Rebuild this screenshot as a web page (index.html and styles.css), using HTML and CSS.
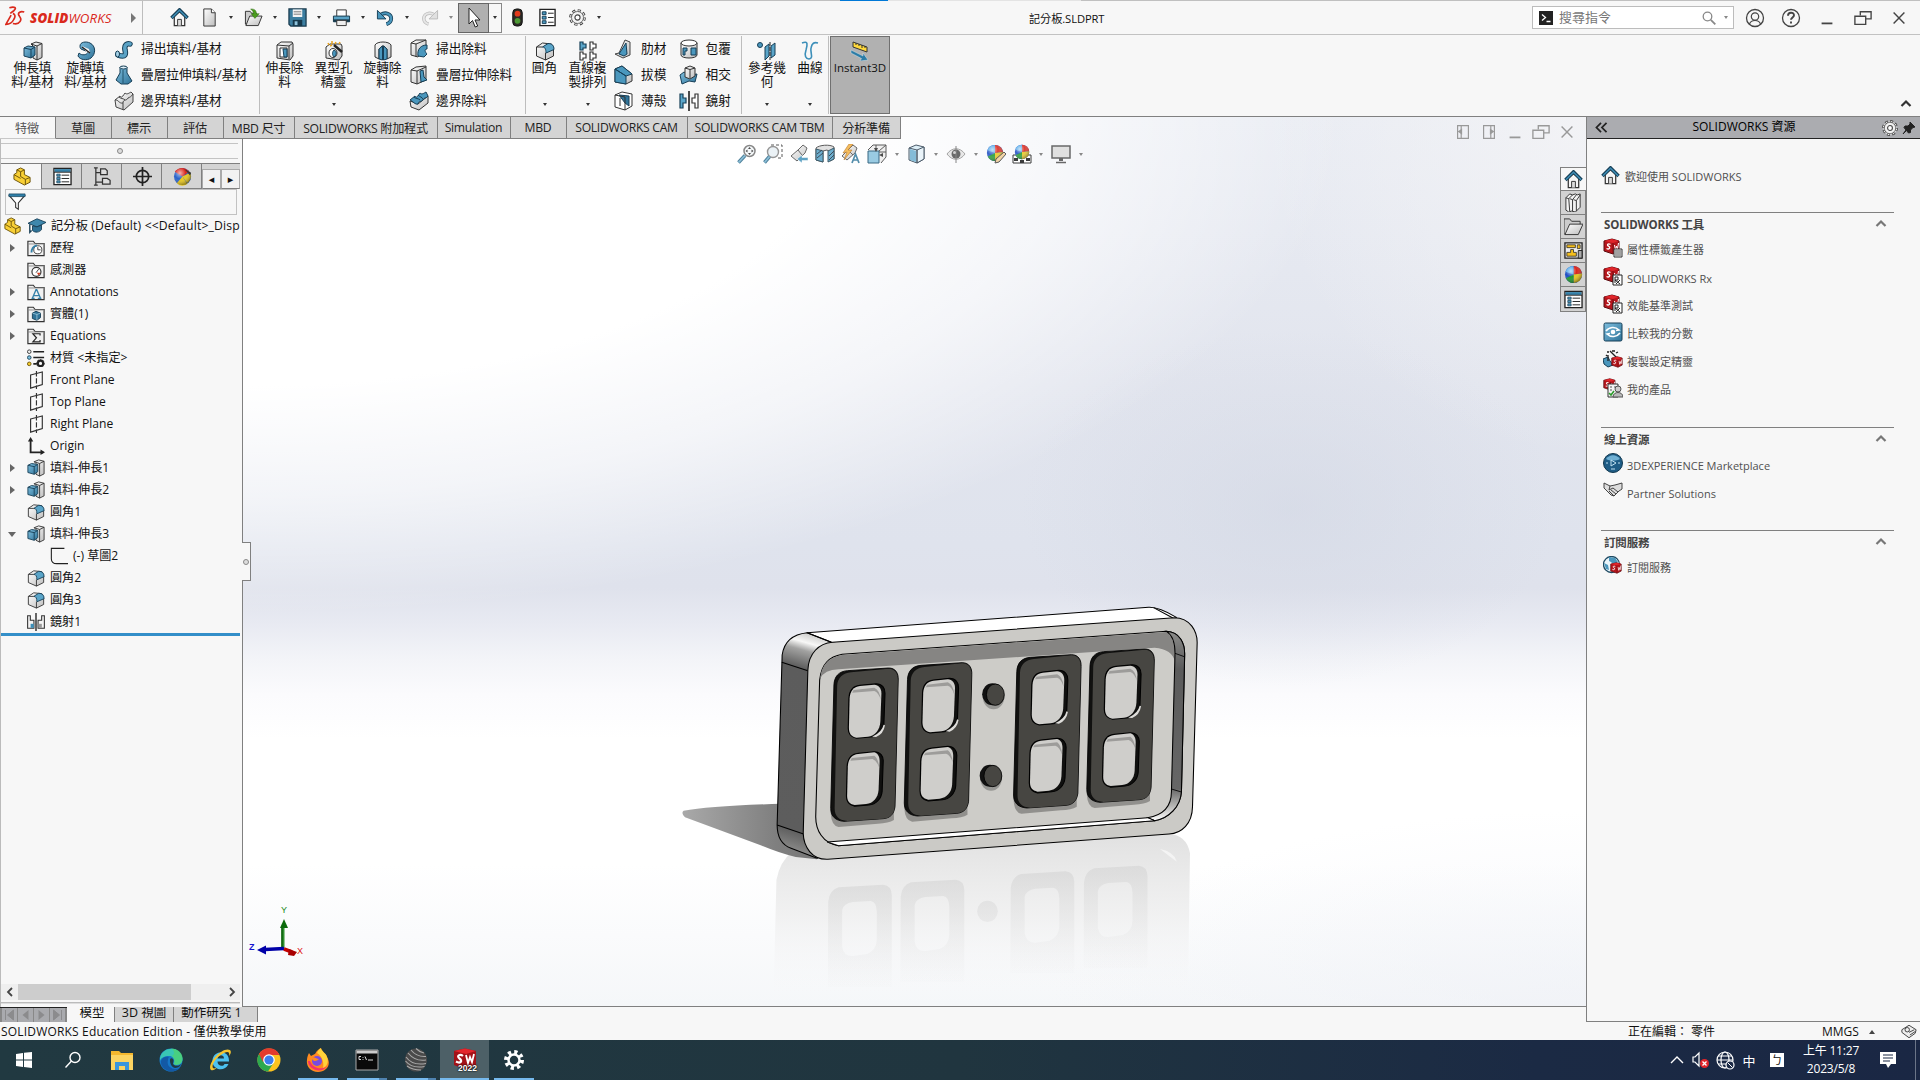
FILE: index.html
```html
<!DOCTYPE html>
<html lang="zh-Hant">
<head>
<meta charset="utf-8">
<title>記分板.SLDPRT</title>
<link rel="stylesheet" href="styles.css">
</head>
<body>
<svg class="defs" width="0" height="0" aria-hidden="true">
<defs>
<linearGradient id="gBlue" x1="0" y1="0" x2="1" y2="1"><stop offset="0" stop-color="#7fbfdf"/><stop offset="1" stop-color="#2f7398"/></linearGradient>
<linearGradient id="gGrey" x1="0" y1="0" x2="1" y2="1"><stop offset="0" stop-color="#fff"/><stop offset="1" stop-color="#bdbdbd"/></linearGradient>
<radialGradient id="gShade" cx=".35" cy=".3" r=".75"><stop offset="0" stop-color="#fff" stop-opacity=".65"/><stop offset=".45" stop-color="#fff" stop-opacity="0"/><stop offset="1" stop-color="#000" stop-opacity=".45"/></radialGradient>
<symbol id="home" viewBox="0 0 20 20"><path d="M4.500 9v9.500h11V9L10 4z" fill="#f6f6f6" stroke="#333" stroke-width="1.300"/><path d="M8 18.500V12h4v6.500" fill="#ddd" stroke="#333"/><path d="M1.500 10.500 10 2l8.500 8.500" fill="none" stroke="#173f57" stroke-width="3.600"/><path d="M2 10.200 10 2.300l8 7.900" fill="none" stroke="#3d8db5" stroke-width="1.500"/></symbol>
<symbol id="doc" viewBox="0 0 20 20"><path d="M4 1h8l4 4v14H4z" fill="url(#gGrey)" stroke="#333"/><path d="M12 1v4h4" fill="#fff" stroke="#333"/></symbol>
<symbol id="open" viewBox="0 0 20 20"><path d="M1.500 17V3.500h5l1.500 2h5V17z" fill="#ccc" stroke="#333"/><path d="m2 18.500 4-10h13l-4 10z" fill="url(#gGrey)" stroke="#333"/><path d="M7 1c5 0 6 2 6 5h3l-4.500 5L7.500 6H10c0-2-1-3-3-5z" fill="#4a9b1d" stroke="#2a6a0c" stroke-width=".5"/></symbol>
<symbol id="save" viewBox="0 0 20 20"><path d="M1 1h18v18H3l-2-2z" fill="#3c7ea0" stroke="#17394c" stroke-width="1.300"/><path d="M5 1.500h10v8H5z" fill="#f4f4f4"/><path d="M6 4h8M6 6.500h8" stroke="#777"/><path d="M5 12.500h10V19H5z" fill="#17394c"/><path d="M7 14h3v4H7z" fill="#8fc3dc"/></symbol>
<symbol id="print" viewBox="0 0 20 20"><path d="M5 2h10v7H5z" fill="#fff" stroke="#333"/><path d="M1.500 8.500h17v6h-17z" fill="#5aa3c6" stroke="#17394c"/><path d="M1.500 12h17v2.500h-17z" fill="#17394c"/><path d="M5 13h10v5.500H5z" fill="#eee" stroke="#333"/></symbol>
<symbol id="undo" viewBox="0 0 20 20"><path d="M5 7c5-3 11-1 11 4 0 3-2 5-5 6" fill="none" stroke="#173f57" stroke-width="4"/><path d="M5 7c5-3 11-1 11 4 0 3-2 5-5 6" fill="none" stroke="#4a97bd" stroke-width="2.300"/><path d="M1.500 2.500v9h9z" fill="#4a97bd" stroke="#173f57"/></symbol>
<symbol id="redo" viewBox="0 0 20 20"><path d="M15 7C10 4 4 6 4 11c0 3 2 5 5 6" fill="none" stroke="#bbb" stroke-width="3.500"/><path d="M15 7C10 4 4 6 4 11c0 3 2 5 5 6" fill="none" stroke="#e6e6e6" stroke-width="2"/><path d="M18.500 2.500v9h-9z" fill="#e0e0e0" stroke="#bbb"/></symbol>
<symbol id="cursor" viewBox="0 0 20 20"><path d="M5 0v16l3.500-3.500 2.700 6.500 2.500-1-2.700-6h5z" fill="#fff" stroke="#222"/></symbol>
<symbol id="traffic" viewBox="0 0 20 20"><rect x="5" y="1" width="10" height="18" rx="4" fill="#2c2a26" stroke="#111"/><circle cx="10" cy="6" r="3" fill="#e23a1c"/><circle cx="10" cy="13.500" r="3" fill="#4d9a35"/></symbol>
<symbol id="list" viewBox="0 0 20 20"><path d="M2 1.500h16v17H2z" fill="#fff" stroke="#222" stroke-width="1.400"/><path d="M4.500 4h4v3h-4zM4.500 8.700h4v3h-4zM4.500 13.400h4v3h-4z" fill="#4a97bd" stroke="#173f57"/><path d="M10.500 5.500h6M10.500 10h6M10.500 15h6" stroke="#222"/></symbol>
<symbol id="props" viewBox="0 0 20 20"><path d="M1 1.500h18v17H1z" fill="#fff" stroke="#222" stroke-width="1.400"/><path d="M1.700 2.200h16.600v3H1.700z" fill="#3480a8"/><path d="M1 5.500h18" stroke="#222"/><path d="M4 7.500h3.500v2.200H4zM4 11h3.500v2.200H4zM4 14.500h3.500v2.200H4z" fill="#4a97bd" stroke="#173f57" stroke-width=".8"/><path d="M9 8.600h8M9 12.100h8M9 15.600h8" stroke="#222"/></symbol>
<symbol id="gear" viewBox="0 0 20 20"><circle cx="10" cy="10" r="7.300" fill="#f2f2f2" stroke="#444" stroke-width="3" stroke-dasharray="3.200 2.534"/><circle cx="10" cy="10" r="7.300" fill="none" stroke="#f2f2f2" stroke-width="1.200" stroke-dasharray="1.800 3.934" stroke-dashoffset="-.7"/><circle cx="10" cy="10" r="6.300" fill="#f2f2f2" stroke="#555" stroke-width=".8"/><circle cx="10" cy="10" r="2.700" fill="#fff" stroke="#444" stroke-width="1.200"/></symbol>
<symbol id="extrude" viewBox="0 0 20 20"><path d="m8 3 5-2 6 1.500v14L14 19l-4-2V5z" fill="url(#gGrey)" stroke="#333"/><path d="M14 5v14M8 3l6 2 5-2.500" fill="none" stroke="#333"/><path d="m1 7 4-2 7 1v8l-4 3-7-2z" fill="url(#gBlue)" stroke="#173f57"/><path d="m1 7 7 1.500V17M8 8.500 12 6" fill="none" stroke="#173f57"/></symbol>
<symbol id="revolve" viewBox="0 0 20 20"><path d="M4 5c0-4 6-5 10-3 6 3 6 11 1 15-4 3-11 2-13-2l1-3c3 3 8 2 9-1L5 8C4 7 4 6 4 5z" fill="url(#gBlue)" stroke="#173f57"/><path d="m6 5 7 3 1 4-4-1z" fill="#f4f4f4"/><path d="m6 6 8 6" stroke="#222" stroke-width="1.400"/></symbol>
<symbol id="sweep" viewBox="0 0 20 20"><path d="M4 16c8 3 8-1 7-5-1-5 2-7 5-6" fill="none" stroke="#173f57" stroke-width="5.500" stroke-linecap="round"/><path d="M4 16c8 3 8-1 7-5-1-5 2-7 5-6" fill="none" stroke="#5ba3c6" stroke-width="3.500" stroke-linecap="round"/><ellipse cx="3.500" cy="15" rx="2" ry="3" fill="#a6d3e8" stroke="#173f57"/></symbol>
<symbol id="loft" viewBox="0 0 20 20"><path d="M6 2h7v6l5 8-4 3H7l-5-4 4-7z" fill="url(#gBlue)" stroke="#173f57"/><ellipse cx="9.500" cy="2.500" rx="3.500" ry="1.500" fill="#dff0f8" stroke="#173f57"/><path d="M9 5v13" stroke="#21546f"/></symbol>
<symbol id="bound" viewBox="0 0 20 20"><path d="m1 9 5-4c1 3 3 0 5-3 2 2 4 0 6-1l2 2v8l-9 8-8-3z" fill="url(#gGrey)" stroke="#444"/><path d="M1 9c3-1 4 4 8 3 0-4 4-2 5-5 2-1 3-1 5-4M9 12v7M5 6c2 2 4 1 6 3" fill="none" stroke="#444"/></symbol>
<symbol id="boundcut" viewBox="0 0 20 20"><path d="m1 10 8 3 10-8v7l-9 7-8-3z" fill="url(#gGrey)" stroke="#333"/><path d="m1 9 5-4c1 3 3 0 5-3 2 2 4 0 6-1l2 4c-2 3-4 1-5 4-2 2-5 1-5 4-3 1-5-3-8-4z" fill="#4a97bd" stroke="#173f57"/><path d="M5 6c2 2 4 1 6 3M9 4c2 2 4 2 5 4" fill="none" stroke="#173f57"/></symbol>
<symbol id="cut" viewBox="0 0 20 20"><path d="m2 4 4-3h11l1 2v12l-3 4-13-2z" fill="url(#gGrey)" stroke="#333"/><path d="M2 4l12 1 4-3M14 5v13" fill="none" stroke="#333"/><path d="M5 7h7v9H5z" fill="#fff" stroke="#333"/><path d="M8 8h4v8H9z" fill="#4a97bd" stroke="#173f57"/></symbol>
<symbol id="hole" viewBox="0 0 20 20"><path d="m2 6 4-3h11l1 2v10l-3 4-13-2z" fill="url(#gGrey)" stroke="#333"/><ellipse cx="9" cy="12" rx="4" ry="4.500" fill="#fff" stroke="#333"/><path d="M10 9c3 1 3 5 0 7-2-2-2-5 0-7z" fill="#4a97bd" stroke="#173f57"/><path d="m10 4 8 7" stroke="#222" stroke-width="2.500"/><path d="M4 2l1 2M8 0v3M12 1l-1 2M15 3l1-2M6 5l2-1" stroke="#e8a21c" stroke-width="1.500"/></symbol>
<symbol id="revcut" viewBox="0 0 20 20"><path d="M2 4c2-4 14-4 16 0v12l-4 2V8l-3-3H9L6 8v10l-4-2z" fill="url(#gGrey)" stroke="#333"/><path d="M6 8 9.500 5v14L6 18zM10.500 5 14 8v10l-3.500 1z" fill="#4a97bd" stroke="#173f57"/></symbol>
<symbol id="sweepcut" viewBox="0 0 20 20"><path d="m2 4 5-3h10v5l-8 12-7-2z" fill="url(#gGrey)" stroke="#333"/><path d="M2 4l5 1V18M7 5l10-4" fill="none" stroke="#333"/><path d="M9 17C8 10 12 6 18 6v4c-3 0-2 3 0 5l-3 3z" fill="#4a97bd" stroke="#173f57"/></symbol>
<symbol id="loftcut" viewBox="0 0 20 20"><path d="m2 5 5-3 10-1v14l-9 4-6-2z" fill="url(#gGrey)" stroke="#333"/><path d="M2 5l6 1v13M8 6l9-4" fill="none" stroke="#333"/><path d="M11 6l3-1 1 7 3 3-6 2z" fill="#4a97bd" stroke="#173f57"/></symbol>
<symbol id="fillet" viewBox="0 0 20 20"><path d="m1.500 6 6-4 9 1 2 5v7l-8 4-9-4z" fill="url(#gGrey)" stroke="#333"/><path d="M7.500 6 13 2.500c4 0 6 2 6 6L11 12c0-4-1-6-3.500-6z" fill="#5aa5c9" stroke="#173f57"/><path d="m1.500 6 6 0M10.500 12v7" fill="none" stroke="#333"/></symbol>
<symbol id="pattern" viewBox="0 0 20 20"><path d="M2 1h3v2h3v4H5v2H2z" fill="#5aa5c9" stroke="#173f57" stroke-width="1.200"/><path d="M12 1h3v2h3v4h-3v2h-3zM2 11h3v2h3v4H5v2H2zM12 11h3v2h3v4h-3v2h-3z" fill="#fff" stroke="#333" stroke-width="1.200"/></symbol>
<symbol id="rib" viewBox="0 0 20 20"><path d="m1 15 4-1 6-13 5 2v13l-7 3z" fill="url(#gGrey)" stroke="#444"/><path d="m5 15 7-11 1 11-3 2z" fill="#4a97bd" stroke="#173f57"/></symbol>
<symbol id="draft" viewBox="0 0 20 20"><path d="m1 4 7-3 10 8v7l-6 3-11-2z" fill="url(#gGrey)" stroke="#333"/><path d="m1 4 7-3 10 8-6 2zM1 4v13l11 2v-8z" fill="#4a97bd" stroke="#173f57"/></symbol>
<symbol id="shell" viewBox="0 0 20 20"><path d="m1 4 7-3 10 2v12l-7 4-10-3z" fill="#fff" stroke="#333"/><path d="m5 4 10 1v10l-4-3z" fill="#2f7398" stroke="#173f57"/><path d="M1 4l10 2v13M6 7v8" fill="none" stroke="#333"/></symbol>
<symbol id="wrap" viewBox="0 0 20 20"><path d="M2 4v12c0 4 16 4 16 0V4z" fill="url(#gGrey)" stroke="#333"/><ellipse cx="10" cy="4" rx="8" ry="3" fill="#fff" stroke="#333"/><path d="M4 9h4v3H6v4H4zM12 9h5v7h-5v-3z" fill="#4a97bd" stroke="#173f57"/></symbol>
<symbol id="intersect" viewBox="0 0 20 20"><path d="m1 10 4-3 6 3 7-1-2 8-6-1-7 3z" fill="url(#gBlue)" stroke="#173f57"/><path d="m6 3 5-2 5 2v8l-5 3-5-2z" fill="url(#gGrey)" stroke="#333"/><path d="m6 3 5 1.500V13M11 4.500 16 3" fill="none" stroke="#333"/></symbol>
<symbol id="mirror" viewBox="0 0 20 20"><path d="M1 3h3v4h3v5H4v5H1z" fill="#5aa5c9" stroke="#173f57" stroke-width="1.200"/><path d="M19 3h-3v4h-3v5h3v5h3z" fill="#fff" stroke="#333" stroke-width="1.200"/><path d="M10 0v20" stroke="#111" stroke-width="1.500"/></symbol>
<symbol id="mirrort" viewBox="0 0 20 20"><path d="M.7 3h3v5h4v9h-7zM19.300 3h-3v5h-4v9h7z" fill="#f4f4f4" stroke="#333" stroke-width="1.200"/><path d="M4 12h3.500v4.500H4z" fill="#3c8fb9"/><path d="M13 12h3.500v4.500H13z" fill="#999"/><path d="M10 0v20" stroke="#111" stroke-width="1.400"/></symbol>
<symbol id="refgeo" viewBox="0 0 20 20"><circle cx="3" cy="4" r="2.500" fill="#4a97bd" stroke="#173f57"/><path d="m8 6 4-3v12l-4 4zM14 5l4-3v12l-4 3z" fill="#5aa5c9" stroke="#173f57"/><path d="M13 1v18" stroke="#222" stroke-dasharray="4 1"/></symbol>
<symbol id="curve" viewBox="0 0 20 20"><path d="M2 2c7-3 5 3 4 7-2 6 0 9 3 9 5 0 1-7 2-11 1-5 3-6 7-5" fill="none" stroke="#3c8fb9" stroke-width="1.600"/></symbol>
<symbol id="instant" viewBox="0 0 20 20"><path d="m3 1 14 5v5L3 6z" fill="#ffd83b" stroke="#333"/><path d="m6 2 0 2M9 3v2M12 4v3M15 5v2" stroke="#333"/><path d="m1 9 12 6v-3l5 7-8 1 1.500-2.500L1 12z" fill="#2c7ca6" stroke="#e8f4fa" stroke-width=".4"/></symbol>
<symbol id="ball" viewBox="0 0 20 20"><circle cx="10" cy="10" r="9" fill="#1d4fc4"/><path d="M10 10V1a9 9 0 0 1 9 8z" fill="#d9261c"/><path d="M10 10V1a9 9 0 0 0-8.500 6z" fill="#4aa3e8"/><path d="m10 10 9-1a9 9 0 0 1-9 10z" fill="#e9c81c"/><path d="M10 10v9a9 9 0 0 1-8-5z" fill="#1d9a2c"/><circle cx="10" cy="10" r="9" fill="url(#gShade)"/></symbol>
<symbol id="ballm" viewBox="0 0 20 20"><circle cx="10" cy="10" r="9" fill="#2a62c8"/><path d="M10 10 2 5a9 9 0 0 1 15 0z" fill="#d9261c"/><path d="m10 10 8-4a9 9 0 0 1-3 11z" fill="#e9c81c"/><path d="m10 10 5 8a9 9 0 0 1-11-1z" fill="#e9c81c"/><path d="m12 2 6 7 1-3z" fill="#222"/><circle cx="10" cy="10" r="9" fill="url(#gShade)"/></symbol>
<symbol id="part" viewBox="0 0 20 20"><path d="m1 8 3-2V3l4-2 4 2v5l6 3v5l-6 3L1 13z" fill="#f8cf35" stroke="#6b5208"/><path d="m4 3 4 2v5l5 3 5-2M8 5l4-2M13 13v6M1 8l7 4" fill="none" stroke="#6b5208"/></symbol>
<symbol id="cfg" viewBox="0 0 20 20"><path d="M3 1v18M1 1h4M3 6h7M3 16h7M1 19h4" fill="none" stroke="#333" stroke-width="1.300"/><path d="M8 2h5l2 2v4H8zM10 12h5l3 2v4h-8z" fill="#ddd" stroke="#333" stroke-width="1.300"/></symbol>
<symbol id="dim" viewBox="0 0 20 20"><circle cx="10" cy="10" r="6.500" fill="none" stroke="#222" stroke-width="1.800"/><path d="M10 0v20M0 10h20" stroke="#222" stroke-width="1.800"/></symbol>
<symbol id="funnel" viewBox="0 0 20 20"><path d="M1.500 3h17l-7 8v7l-3-2v-5z" fill="#fff" stroke="#333" stroke-width="1.200"/><path d="M1 1h18v3H1z" fill="#2f7fa8" stroke="#173f57" stroke-width=".7"/></symbol>
<symbol id="cap" viewBox="0 0 20 20"><path d="m0 7 10-5 10 4-10 5z" fill="#3f88ad" stroke="#173f57"/><path d="M5 10v5c3 3 8 2 10-1V9l-5 2z" fill="#2f7398" stroke="#173f57"/><path d="M2 8v9l2-2" fill="none" stroke="#173f57" stroke-width="1.500"/></symbol>
<symbol id="folder" viewBox="0 0 20 20"><path d="M1 18.500v-16h6l2 2.500h10v13.500z" fill="#f1f1f1" stroke="#333" stroke-width="1.300"/><path d="M1 5.500h18" stroke="#888"/></symbol>
<symbol id="mat" viewBox="0 0 20 20"><circle cx="2.500" cy="3" r="2" fill="#eee" stroke="#333"/><circle cx="2.500" cy="9.500" r="2" fill="#7cc0df" stroke="#173f57"/><circle cx="2.500" cy="16.500" r="2" fill="#f5cc2c" stroke="#6b5208"/><path d="M7 3h12M7 9.500h12M7 16.500h4" stroke="#222" stroke-width="1.800"/><circle cx="15" cy="16" r="3" fill="none" stroke="#222" stroke-width="2.400"/><circle cx="15" cy="16" r="4.300" fill="none" stroke="#222" stroke-dasharray="1.500 1.700"/></symbol>
<symbol id="plane" viewBox="0 0 20 20"><path d="M4 4.500 17 1v14L4 19z" fill="#fafafa" stroke="#333" stroke-width="1.300"/><path d="M10.500 0v20" stroke="#333" stroke-width="1.300" stroke-dasharray="6 2"/></symbol>
<symbol id="origin" viewBox="0 0 20 20"><path d="M4 3v14h14" fill="none" stroke="#222" stroke-width="2"/><path d="M4 0 1 5h6zM20 17l-5-3v6z" fill="#222"/></symbol>
<symbol id="sketch" viewBox="0 0 20 20"><path d="M16 1.500H1.500V13c0 4 3 5.500 6 5.500H20" fill="none" stroke="#222" stroke-width="1.200"/></symbol>
<symbol id="sw" viewBox="0 0 20 20"><path d="m1 3 8-2 7 2v10l-6 3-9-3z" fill="#b5161c" stroke="#5a0c10"/><path d="m1 3 9 2 6-2-7-2z" fill="#e0252a"/><path d="M10 5v11" stroke="#7a0c10"/><path d="M7.500 6.500C5 5 3.500 7 5.500 8.200 8 9.500 6 12 3.500 10.500" fill="none" stroke="#fff" stroke-width="1.400"/><path d="m11.500 7 1 5 1-4 1 3 1-6" fill="none" stroke="#fff"/></symbol>
<symbol id="mag" viewBox="0 0 20 20"><circle cx="12.500" cy="7" r="5.500" fill="#f4f8fa" stroke="#777" stroke-width="1.500"/><path d="m1.500 18.500 6.500-7" stroke="#356f8d" stroke-width="3.600"/><path d="m1.500 18.500 6.500-7" stroke="#7cb6d2" stroke-width="1.700"/></symbol>
<symbol id="scope" viewBox="0 0 20 20"><path d="m1 12 6-6 5-5 4 3-2 5-8 7z" fill="url(#gGrey)" stroke="#555"/><path d="m7 6 5 5" stroke="#555"/></symbol>
<symbol id="section" viewBox="0 0 20 20"><path d="M1 4c3-3 14-4 18-1v12l-4 2V8l-3-2-4 1v11l-7-2z" fill="#ddd" stroke="#444"/><path d="M1 5 8 7v11l-7-2zM13 7l6-3v11l-6 3z" fill="#5aa5c9" stroke="#245"/><path d="m2 10 5-4M2 14l6-5M14 12l5-5M14 16l5-5" stroke="#234"/></symbol>
<symbol id="vieworient" viewBox="0 0 20 20"><path d="m1 6 5-5h13v12l-5 6" fill="#eee" stroke="#444"/><path d="M1 7h11v12H1z" fill="#8cc4df" stroke="#1f5573"/><path d="M9 1v6M19 8h-7M12 7l7-6" stroke="#444"/><path d="m7 4 2 4 2-4zM16 9l-4 2 4 2z" fill="#333"/></symbol>
<symbol id="cube" viewBox="0 0 20 20"><path d="m2 4 7-3 8 2v12l-7 4-8-3z" fill="#d8edf6" stroke="#345"/><path d="m10 6 7-3v12l-7 4z" fill="#e8f4fa" stroke="#345"/><path d="m2 4 8 2v13" fill="none" stroke="#345"/><path d="m3 5 6 2v11l-6-2z" fill="#74b4d3"/></symbol>
<symbol id="eye" viewBox="0 0 20 20"><path d="M1 10c5-7 13-7 18 0-5 7-13 7-18 0z" fill="#e6e6e6" stroke="#999"/><circle cx="10" cy="10" r="4.500" fill="#555"/><path d="M10 2v17" stroke="#777"/><circle cx="8.500" cy="8.500" r="1.500" fill="#ccc"/></symbol>
<symbol id="screen" viewBox="0 0 20 20"><path d="M1 2h18v12H1z" fill="#ddd" stroke="#555" stroke-width="1.500"/><path d="M8 14h4v3H8z" fill="#555"/><path d="M5 18.500h10" stroke="#555" stroke-width="1.500"/></symbol>
<symbol id="restore" viewBox="0 0 20 20"><path d="M7 7V3h12v8h-6M1 8h12v9H1z" fill="none" stroke="currentColor" stroke-width="1.500"/></symbol>
<symbol id="close" viewBox="0 0 20 20"><path d="m4 4 12 12M16 4 4 16" stroke="currentColor" stroke-width="1.600"/></symbol>
<symbol id="min" viewBox="0 0 20 20"><path d="M4 16h12" stroke="currentColor" stroke-width="2"/></symbol>
<symbol id="up" viewBox="0 0 12 12"><path d="m1.500 8 4.500-4.500L10.500 8" fill="none" stroke="currentColor" stroke-width="2.200"/></symbol>
<symbol id="books" viewBox="0 0 20 20"><path d="m2 5 4-4 3 1 3-1 2 1 3-1v14l-5 5-4-1-3 1-3-2z" fill="#f4f4f4" stroke="#333"/><path d="M2 5l3 1 1 13M5 6l4-4M6 6l3 1v12M9 7l4-5M10 7l3 1v11M13 8l4-6" fill="none" stroke="#333"/></symbol>
<symbol id="folder2" viewBox="0 0 20 20"><path d="M0 17V2h6l2 2.500h9v3" fill="#ccc" stroke="#333"/><path d="m1 18.500 5-11h14l-5 11z" fill="url(#gGrey)" stroke="#333"/><path d="M0 17l1 1.500" stroke="#333"/></symbol>
<symbol id="palette" viewBox="0 0 20 20"><path d="M1 2h18v16H1z" fill="#eee" stroke="#222" stroke-width="1.400"/><path d="M3 4h9v3H3zM14 4h3v4h-3zM7 9h3v3h3v4H3v-4h4z" fill="#f5bf1c" stroke="#222" stroke-width=".8"/><path d="M15 10h4v8h-4z" fill="#aaa" stroke="#222"/></symbol>
</defs>
</svg>

<div class="app">
<header class="titlebar">
  <div class="brand">
    <svg class="ds" viewBox="0 0 24 22"><path d="M5 1.500c6-1.500 9 0 5 3.500L6 8M9 8c3 1 3 4 1 7-2 4-5 5.500-9 5.500L7 10M22 6.500c-4-1.500-8 .5-6 4 2 3 3 4 1 7-1.500 2.500-4 3-8 2" fill="none" stroke="#da291c" stroke-width="1.900"/></svg>
    <span class="brand-name"><b>SOLID</b><i>WORKS</i></span>
    <span class="brand-arrow"></span>
  </div>
  <nav class="quick">
    <span class="qi"><svg><use href="#home"/></svg></span>
    <span class="qi"><svg><use href="#doc"/></svg></span><i class="dd"></i>
    <span class="qi"><svg><use href="#open"/></svg></span><i class="dd"></i>
    <span class="qi"><svg><use href="#save"/></svg></span><i class="dd"></i>
    <span class="qi"><svg><use href="#print"/></svg></span><i class="dd"></i>
    <span class="qi"><svg><use href="#undo"/></svg></span><i class="dd"></i>
    <span class="qi"><svg><use href="#redo"/></svg></span><i class="dd dim"></i>
    <span class="pick"><svg><use href="#cursor"/></svg></span><span class="pick-dd"><i class="dd"></i></span>
    <span class="qi"><svg><use href="#traffic"/></svg></span>
    <span class="qi"><svg><use href="#list"/></svg></span>
    <span class="qi"><svg><use href="#gear"/></svg></span><i class="dd"></i>
  </nav>
  <div class="doc-title"><span>記分板.SLDPRT</span></div>
  <div class="search"><svg class="prompt" viewBox="0 0 14 14"><path d="M0 0h14v14H0z" fill="#222"/><path d="m3 3.500 3.500 3L3 9.500M7.500 10.500h4" fill="none" stroke="#fff" stroke-width="1.300"/></svg><span>搜尋指令</span><svg class="glass" viewBox="0 0 14 14"><circle cx="5.500" cy="5.500" r="4.300" fill="none" stroke="#888" stroke-width="1.300"/><path d="m8.800 8.800 4.500 4.500" stroke="#888" stroke-width="1.800"/></svg><i class="dd dim"></i></div>
  <div class="wincontrols">
    <svg viewBox="0 0 20 20"><circle cx="10" cy="10" r="8.500" fill="none" stroke="currentColor" stroke-width="1.300"/><circle cx="10" cy="8.500" r="3.700" fill="none" stroke="currentColor" stroke-width="1.200"/><path d="M4.500 16c1-3 3-3.500 5.500-3.500s4.500.5 5.500 3.500" fill="none" stroke="currentColor" stroke-width="1.200"/></svg>
    <svg viewBox="0 0 20 20"><circle cx="10" cy="10" r="8.500" fill="none" stroke="currentColor" stroke-width="1.300"/><path d="M7 7.800c0-4 6-4 6-.5 0 2-3 2.300-3 4.500M10 13.500v2" fill="none" stroke="currentColor" stroke-width="1.900"/></svg>
    <svg><use href="#min"/></svg><svg><use href="#restore"/></svg><svg><use href="#close"/></svg>
  </div>
</header>

<section class="ribbon">
  <div class="big w53"><svg><use href="#extrude"/></svg><span>伸長填<br>料/基材</span></div>
  <div class="big w53"><svg><use href="#revolve"/></svg><span>旋轉填<br>料/基材</span></div>
  <div class="stack w147"><div><svg><use href="#sweep"/></svg>掃出填料/基材</div><div><svg><use href="#loft"/></svg>疊層拉伸填料/基材</div><div><svg><use href="#bound"/></svg>邊界填料/基材</div></div>
  <div class="sep"></div>
  <div class="big w49"><svg><use href="#cut"/></svg><span>伸長除<br>料</span></div>
  <div class="big w49"><svg><use href="#hole"/></svg><span>異型孔<br>精靈</span><i class="dd"></i></div>
  <div class="big w49"><svg><use href="#revcut"/></svg><span>旋轉除<br>料</span></div>
  <div class="stack w117"><div><svg><use href="#sweepcut"/></svg>掃出除料</div><div><svg><use href="#loftcut"/></svg>疊層拉伸除料</div><div><svg><use href="#boundcut"/></svg>邊界除料</div></div>
  <div class="sep"></div>
  <div class="big w37"><svg><use href="#fillet"/></svg><span>圓角</span><i class="dd"></i></div>
  <div class="big w49"><svg><use href="#pattern"/></svg><span>直線複<br>製排列</span><i class="dd"></i></div>
  <div class="stack w64"><div><svg><use href="#rib"/></svg>肋材</div><div><svg><use href="#draft"/></svg>拔模</div><div><svg><use href="#shell"/></svg>薄殼</div></div>
  <div class="stack w64"><div><svg><use href="#wrap"/></svg>包覆</div><div><svg><use href="#intersect"/></svg>相交</div><div><svg><use href="#mirror"/></svg>鏡射</div></div>
  <div class="sep"></div>
  <div class="big w51"><svg><use href="#refgeo"/></svg><span>參考幾<br>何</span><i class="dd"></i></div>
  <div class="big w36"><svg><use href="#curve"/></svg><span>曲線</span><i class="dd"></i></div>
  <div class="sep"></div>
  <div class="big instant"><svg><use href="#instant"/></svg><span>Instant3D</span></div>
  <svg class="collapse"><use href="#up"/></svg>
</section>

<div class="workspace">
  <main class="main">
    <div class="viewport">
      <svg class="model" viewBox="0 0 1568 1248" preserveAspectRatio="none">
        <defs>
          <linearGradient id="shadow" x1="0" x2="1"><stop offset="0" stop-color="#a9a9a9"/><stop offset=".7" stop-color="#7f7f7f"/><stop offset="1" stop-color="#777"/></linearGradient>
          <linearGradient id="side" gradientUnits="userSpaceOnUse" x1="430" y1="128" x2="230" y2="790"><stop offset="0" stop-color="#c4c4c3"/><stop offset=".05" stop-color="#f8f8f7"/><stop offset=".085" stop-color="#a2a2a1"/><stop offset=".163" stop-color="#5c5c5c"/><stop offset=".84" stop-color="#5d5d5d"/><stop offset=".92" stop-color="#858584"/><stop offset="1" stop-color="#b0b0ae"/></linearGradient>
          <linearGradient id="wall" x1="0" y1="0" x2="0" y2="1"><stop offset="0" stop-color="#8b8b89"/><stop offset=".2" stop-color="#5b5b5b"/><stop offset=".83" stop-color="#666"/><stop offset=".92" stop-color="#b4b4b2"/><stop offset="1" stop-color="#fff"/></linearGradient>
          <linearGradient id="refl" x1="0" y1="730" x2="0" y2="1215" gradientUnits="userSpaceOnUse"><stop offset="0" stop-color="#dfdfdf" stop-opacity=".95"/><stop offset=".5" stop-color="#ededed" stop-opacity=".75"/><stop offset="1" stop-color="#f6f6f8" stop-opacity="0"/></linearGradient>
          <linearGradient id="reflD" x1="0" y1="820" x2="0" y2="1180" gradientUnits="userSpaceOnUse"><stop offset="0" stop-color="#c9c9c9" stop-opacity=".55"/><stop offset="1" stop-color="#ddd" stop-opacity=".05"/></linearGradient>
          <g id="digit">
            <path d="M520 263 L650 250 L655 690 Q640 700 610 701 L500 711 Q480 708 478 670Z" fill="#777674" opacity=".7"/>
            <path d="M525 242 L640 234C660 234 668 250 667 270L658 650C655 672 645 684 625 686L515 694C492 692 478 680 478 655L487 285C488 260 500 244 525 242Z" fill="#111110" stroke="#000" stroke-width="2.500"/>
            <path d="M535 247L640 236C660 236 666 252 666 270L657 650C655 672 645 684 625 686L525 693C502 692 489 680 489 655L496 288C497 264 512 249 535 247Z" fill="#474642"/>
            <path d="M560 286L605 281C622 281 631 295 630 310L627 400C625 422 610 440 590 441L550 445C535 442 527 430 527 415L529 325C530 303 540 288 560 286Z" fill="#10100f" stroke="#000" stroke-width="3"/>
            <path d="M560 288L600 284C612 285 620 295 620 310L617 395C616 418 602 438 582 440L550 443C535 440 529 429 529 413L531 325C532 303 542 290 560 288Z" fill="#cfcecb"/>
            <path d="M542 300L600 293Q616 300 618 330Q612 307 600 303L538 308Z" fill="#9d9c9a"/>
            <path d="M626 404Q622 426 594 440L605 441Q626 432 630 406Z" fill="#deddda"/>
            <g transform="translate(-5 204)"><path d="M560 286L605 281C622 281 631 295 630 310L627 400C625 422 610 440 590 441L550 445C535 442 527 430 527 415L529 325C530 303 540 288 560 286Z" fill="#10100f" stroke="#000" stroke-width="3"/>
            <path d="M560 288L605 283C616 287 620 297 620 310L617 395C616 418 602 436 582 438L550 441C535 438 529 429 529 413L531 325C532 303 542 290 560 288Z" fill="#cfcecb"/>
            <path d="M542 300L605 293Q616 300 619 330Q612 307 600 303L538 308Z" fill="#9d9c9a"/></g>
          </g>
          <g id="dot"><ellipse cx="934" cy="322" rx="30" ry="36" fill="#8a8987" opacity=".8"/><ellipse cx="931" cy="313" rx="29" ry="33" fill="#111"/><ellipse cx="939" cy="314" rx="25" ry="32" fill="#474642" stroke="#000" stroke-width="2.500"/></g>
          <path id="rdig" fill-rule="evenodd" d="M500 892L625 884Q648 886 649 915V1190H470L471 935Q474 900 500 892ZM510 960V1070Q515 1100 540 1098L580 1092Q606 1080 607 1050V965Q606 935 590 933L540 936Q514 940 510 960Z"/>
        </defs>
        <path d="M326 870Q335 815 370 785L470 808L1425 732Q1475 735 1484 790L1478 1215H318Z" fill="url(#refl)"/>
        <g fill="url(#reflD)"><use href="#rdig"/><use href="#rdig" x="203" y="-15"/><use href="#rdig" x="511" y="-40"/><use href="#rdig" x="716" y="-57"/><ellipse cx="917" cy="964" rx="29" ry="32"/></g>
        <path d="M1400 777Q1440 785 1447 815Z" fill="#f4f4f4"/>
        <path d="M66 662Q140 648 340 641L440 808L380 801Q335 790 280 765L70 682Q58 670 66 662Z" fill="url(#shadow)"/>
        <g stroke="#000" stroke-width="3" stroke-linejoin="round">
          <path d="M412 128L1368 52Q1395 50 1446 82L1400 130L480 200Z" fill="#fff"/>
          <path d="M412 128Q350 135 342 195L328 705C328 745 342 765 367 775L440 805L470 780L500 158L480 157Z" fill="url(#side)"/>
          <path d="M412 128L480 157M341 217L414 242M328 705L402 732M1382 53L1436 84" fill="none"/>
          <path d="M483 157L1440 83C1485 83 1505 125 1504 160L1491 650C1490 700 1462 730 1425 732L470 808C425 810 402 770 401 730L414 240C416 190 445 160 483 157Z" fill="#cbcac6"/>
          <path d="M510 193L1418 124C1455 126 1470 160 1469 195L1460 605C1457 650 1425 685 1385 692L500 767C455 760 436 720 436 680L447 270C452 220 475 200 510 193Z" fill="#cdccc8"/>
        </g>
        <path d="M449 260C455 220 475 202 510 195L1418 126C1436 140 1443 165 1442 215Q1435 178 1385 173L500 238Q460 240 449 265Z" fill="#868583"/>
        <path d="M1418 124C1455 126 1470 160 1469 195L1460 605C1457 650 1425 685 1385 692L1365 683C1410 675 1432 650 1432 605L1442 190C1442 160 1435 135 1418 124Z" fill="url(#wall)" stroke="#000" stroke-width="3"/>
        <path d="M1442 190L1468 200M1432 597L1460 606M1365 683L1385 692" stroke="#000" stroke-width="2.500"/>
        <path d="M468 756L1365 683L1385 692L500 767Z" fill="#fff" stroke="#000" stroke-width="3"/>
        <use href="#digit"/><use href="#digit" x="206" y="-16"/><use href="#digit" x="512" y="-40"/><use href="#digit" x="717" y="-57"/>
        <use href="#dot"/><use href="#dot" x="-7" y="244"/>
      </svg>
      <svg class="triad" viewBox="0 0 60 56"><path d="M34 35V13" stroke="#2f8f2f" stroke-width="3"/><path d="M33 35V13" stroke="#0b5f0b" stroke-width="1.500"/><path d="m35 5-4 9h8z" fill="#0b6a0b"/><path d="M35 34.500 16 35.500" stroke="#0000a8" stroke-width="3.500"/><path d="m8 36 9-4.500v9z" fill="#0000a8"/><path d="m35 35 8 3" stroke="#c40000" stroke-width="3.500"/><path d="m40 35 8 3-3 4-6-1z" fill="#a80000"/></svg>
      <span class="axis ax-y">Y</span><span class="axis ax-z">Z</span><span class="axis ax-x">X</span>
      <div class="viewtools">
        <svg class="v" viewBox="0 0 20 20"><use href="#mag" width="20" height="20"/><path d="m12.500 3 1.500 2h-3zM12.500 11l1.500-2h-3zM8.500 7l2-1.500v3zM16.500 7l-2-1.500v3z" fill="#333"/></svg><svg class="v" viewBox="0 0 20 20"><path d="M8 1h11v13h-4" fill="none" stroke="#444" stroke-dasharray="3 2"/><circle cx="10" cy="8" r="5.500" fill="#e9f1f5" stroke="#888" stroke-width="1.400"/><path d="m1.500 18.500 5-6" stroke="#356f8d" stroke-width="3.600"/><path d="m1.500 18.500 5-6" stroke="#7cb6d2" stroke-width="1.700"/></svg><svg class="v" viewBox="0 0 20 20"><path d="m2 12 7-6 5-5 4 3-2 5-8 8z" fill="url(#gGrey)" stroke="#555"/><path d="m9 6 4 5" stroke="#555"/><path d="m8 15 5-4v2.500h6v3h-6V19z" fill="#4a97bd" stroke="#fff" stroke-width=".5"/></svg><svg class="v"><use href="#section"/></svg><svg class="v" viewBox="0 0 20 20"><use href="#scope" width="20" height="20"/><path d="m8 0-6 9 4-1-3 8 8-10H7l5-6z" fill="#f4b64a" stroke="#b46a10" stroke-width=".6"/><path d="m11 19 3.500-9 3.500 9M12.500 16h4" fill="none" stroke="#3c7ea0" stroke-width="1.700"/></svg><svg class="v"><use href="#vieworient"/></svg><i class="dd dim"></i>
        <svg class="v"><use href="#cube"/></svg><i class="dd dim"></i><svg class="v"><use href="#eye"/></svg><i class="dd dim"></i>
        <svg class="v" viewBox="0 0 20 20"><use href="#ball" width="18" height="18"/><path d="m9 19 1-4 8-7 2 2-7 8z" fill="#f2cf9a" stroke="#444"/></svg><svg class="v" viewBox="0 0 20 20"><path d="M1 11h18v8H1z" fill="#fff" stroke="#222"/><path d="M2 14h4v3H2zM8 16h4v3H8zM14 14h4v3h-4z" fill="#222"/><use href="#ball" x="2" width="16" height="16"/></svg><i class="dd dim"></i><svg class="v"><use href="#screen"/></svg><i class="dd dim"></i>
      </div>
      <div class="docwin">
        <svg viewBox="0 0 20 20"><path d="M4 3h12v14H4zM8 3v14" fill="none" stroke="currentColor" stroke-width="1.300"/><path d="M9 6v7L4 9.500z" fill="currentColor"/></svg>
        <svg viewBox="0 0 20 20"><path d="M4 3h12v14H4zM12 3v14" fill="none" stroke="currentColor" stroke-width="1.300"/><path d="M11 6v7l5-3.500z" fill="currentColor"/></svg>
        <svg><use href="#min"/></svg><svg><use href="#restore"/></svg><svg><use href="#close"/></svg>
      </div>
      <div class="sidetabs">
        <span class="on"><svg><use href="#home"/></svg></span><span><svg><use href="#books"/></svg></span><span><svg><use href="#folder2"/></svg></span><span><svg><use href="#palette"/></svg></span><span><svg><use href="#ball"/></svg></span><span><svg><use href="#props"/></svg></span>
      </div>
    </div>
    <nav class="cmdtabs"><span class="on w56">特徵</span><span class="w56">草圖</span><span class="w56">標示</span><span class="w56">評估</span><span class="w71">MBD 尺寸</span><span class="w143">SOLIDWORKS 附加程式</span><span class="w73">Simulation</span><span class="w56">MBD</span><span class="w121">SOLIDWORKS CAM</span><span class="w145">SOLIDWORKS CAM TBM</span><span class="w68">分析準備</span></nav>
    <aside class="tree">
      <div class="grip"><i></i></div>
      <div class="treetabs"><span class="on"><svg><use href="#part"/></svg></span><span><svg><use href="#props"/></svg></span><span><svg><use href="#cfg"/></svg></span><span><svg><use href="#dim"/></svg></span><span><svg><use href="#ballm"/></svg></span><div class="pager"><b>◂</b><b>▸</b></div></div>
      <div class="filter"><svg><use href="#funnel"/></svg></div>
      <div class="root"><svg><use href="#part"/></svg><svg><use href="#cap"/></svg><span>記分板 (Default) &lt;&lt;Default&gt;_Disp</span></div>
      <ul class="nodes">
        <li><i class="tw"></i><svg viewBox="0 0 20 20"><use href="#folder" width="20" height="20"/><circle cx="12" cy="12" r="4.500" fill="#fff" stroke="#333"/><path d="M12 9v3h3" stroke="#333" fill="none"/><path d="M5 15c0-4 2-7 6-8" fill="none" stroke="#3480a8" stroke-width="2"/></svg>歷程</li>
        <li><i></i><svg viewBox="0 0 20 20"><use href="#folder" width="20" height="20"/><circle cx="10.500" cy="12" r="5" fill="#fff" stroke="#333" stroke-width="1.300"/><path d="m10 13 3-4" stroke="#333"/><path d="M11 13h4l-2 3z" fill="#d43a1c"/></svg>感測器</li>
        <li><i class="tw"></i><svg viewBox="0 0 20 20"><use href="#folder" width="20" height="20"/><path d="m6 17 4-9.500h.8L15 17M7.500 14h5.500M5 17h3.500M12 17h4" fill="none" stroke="#3480a8" stroke-width="1.500"/></svg>Annotations</li>
        <li><i class="tw"></i><svg viewBox="0 0 20 20"><use href="#folder" width="20" height="20"/><path d="m6 9 4-2 5 2v5l-4 3-5-2z" fill="#2f7398" stroke="#173f57"/><path d="m6 9 5 1.500 4-1.500M11 10.500V17" stroke="#bfe0ee" fill="none" stroke-width=".7"/></svg>實體(1)</li>
        <li><i class="tw"></i><svg viewBox="0 0 20 20"><use href="#folder" width="20" height="20"/><path d="M14.500 9.500v-2H6.500l4 4.500-4 4.500h8v-2" fill="none" stroke="#222" stroke-width="1.300"/></svg>Equations</li>
        <li><i></i><svg><use href="#mat"/></svg>材質 &lt;未指定&gt;</li>
        <li><i></i><svg><use href="#plane"/></svg>Front Plane</li>
        <li><i></i><svg><use href="#plane"/></svg>Top Plane</li>
        <li><i></i><svg><use href="#plane"/></svg>Right Plane</li>
        <li><i></i><svg><use href="#origin"/></svg>Origin</li>
        <li><i class="tw"></i><svg><use href="#extrude"/></svg>填料-伸長1</li>
        <li><i class="tw"></i><svg><use href="#extrude"/></svg>填料-伸長2</li>
        <li><i></i><svg><use href="#fillet"/></svg>圓角1</li>
        <li><i class="tw open"></i><svg><use href="#extrude"/></svg>填料-伸長3</li>
        <li class="child"><i></i><svg><use href="#sketch"/></svg>(-) 草圖2</li>
        <li><i></i><svg><use href="#fillet"/></svg>圓角2</li>
        <li><i></i><svg><use href="#fillet"/></svg>圓角3</li>
        <li><i></i><svg><use href="#mirrort"/></svg>鏡射1</li>
      </ul>
      <div class="rollback"></div>
      <div class="hscroll"><svg viewBox="0 0 10 10"><path d="M7 1 3 5l4 4" fill="none" stroke="#444" stroke-width="1.800"/></svg><span class="track"><b></b></span><svg viewBox="0 0 10 10"><path d="m3 1 4 4-4 4" fill="none" stroke="#444" stroke-width="1.800"/></svg></div>
      <div class="split"></div>
      <div class="flyout"><i></i></div>
    </aside>
    <div class="modeltabs">
      <div class="vcr"><svg viewBox="0 0 14 14"><path d="M3 2v10M11 2v10L5 7z" fill="#8b8b8d" stroke="#8b8b8d"/></svg><svg viewBox="0 0 14 14"><path d="M10 2v10L4 7z" fill="#8b8b8d"/></svg><svg viewBox="0 0 14 14"><path d="M4 2v10l6-5z" fill="#8b8b8d"/></svg><svg viewBox="0 0 14 14"><path d="M11 2v10M3 2v10l6-5z" fill="#8b8b8d" stroke="#8b8b8d"/></svg></div>
      <span class="on w47">模型</span><span class="w59">3D 視圖</span><span class="w84">動作研究 1</span>
    </div>
  </main>

  <aside class="taskpane">
    <div class="tp-head"><svg class="chev" viewBox="0 0 14 12"><path d="M6.500 1 1.500 6l5 5M12.500 1l-5 5 5 5" fill="none" stroke="#222" stroke-width="1.900"/></svg><span>SOLIDWORKS 資源</span><svg class="tg"><use href="#gear"/></svg><svg class="pin" viewBox="0 0 14 14"><path d="m8 1 5 5-2 .5-2.500 2.500v2.500L6.500 12 4.500 9.500 1 13l3-4L2 6.500 3 5h3L8 3z" fill="#222" stroke="#222"/></svg></div>
    <div class="tp-body">
      <div class="welcome"><svg><use href="#home"/></svg>歡迎使用 SOLIDWORKS</div>
      <section class="grp tools">
        <h3>SOLIDWORKS 工具<svg><use href="#up"/></svg></h3>
        <p><svg viewBox="0 0 20 20"><use href="#sw" width="20" height="20"/><path d="M11 11h8v8h-8z" fill="#eee" stroke="#333"/><path d="M12 13h6M12 15h6M12 17h6" stroke="#555"/></svg>屬性標籤產生器</p>
        <p class="lat"><svg viewBox="0 0 20 20"><use href="#sw" width="20" height="20"/><path d="M10 9h9v10h-9z" fill="#fff" stroke="#222"/><path d="M12 17v-6h3v3h-3l5 4m0-4-4 4" fill="none" stroke="#222"/></svg>SOLIDWORKS Rx</p>
        <p><svg viewBox="0 0 20 20"><use href="#sw" width="20" height="20"/><path d="M10 9h9v10h-9z" fill="#fff" stroke="#222"/><path d="M12 17v-6h3v3h-3l5 4m0-4-4 4" fill="none" stroke="#222"/></svg>效能基準測試</p>
        <p><svg viewBox="0 0 20 20"><rect x="1" y="1" width="18" height="18" rx="1.500" fill="url(#gBlue)" stroke="#173f57"/><circle cx="10" cy="10" r="2.300" fill="#fff"/><path d="M3 9c3-4 9-5 13-1l-3 .5M17 11c-3 4-9 5-13 1l3-.5" fill="none" stroke="#fff" stroke-width="1.600"/></svg>比較我的分數</p>
        <p><svg viewBox="0 0 20 20"><path d="m0 9 5-2 2 4 3 4-5 2-4-3z" fill="#4a97bd" stroke="#173f57"/><path d="M5 5v6M7 1l7 7M4 2h2M9 1h3M13 3l2-1M3 5l1 1" stroke="#222" stroke-width="1.300"/><use href="#sw" x="8" y="6" width="14" height="14"/></svg>複製設定精靈</p>
        <p><svg viewBox="0 0 20 20"><use href="#sw" width="15" height="15"/><path d="M5 6h10v13H5z" fill="#f4f4f4" stroke="#333"/><path d="M7 9h2M7 12h2M11 9h3" stroke="#555"/><path d="m6 15 2 2 3-4" fill="none" stroke="#2a9a2a" stroke-width="1.600"/><circle cx="15" cy="11" r="3" fill="#ccc" stroke="#555"/><path d="M10 19c0-6 10-6 10 0z" fill="#bbb" stroke="#555"/></svg>我的產品</p>
      </section>
      <section class="grp online">
        <h3>線上資源<svg><use href="#up"/></svg></h3>
        <p class="lat"><svg viewBox="0 0 20 20"><circle cx="10" cy="10" r="9.500" fill="#1f5d86" stroke="#12384f"/><path d="M3 6c4-5 10-5 14 0-4 2-10 2-14 0z" fill="#6fb0d4"/><path d="m8 7 5 3-5 3z" fill="none" stroke="#bfe0f0"/><path d="M8 16h4M3 10h2M15 10h2" stroke="#bfe0f0"/></svg>3DEXPERIENCE Marketplace</p>
        <p class="lat"><svg viewBox="0 0 20 20"><path d="m1 2 6 3 5-1 7-2v6l-3 2-5 5-3-1-4-4-3-3z" fill="#ddd" stroke="#444"/><path d="m7 5-1 4 4-2 5 4M6 10l5 5M8 9l5 4" fill="none" stroke="#444"/></svg>Partner Solutions</p>
      </section>
      <section class="grp subs">
        <h3>訂閱服務<svg><use href="#up"/></svg></h3>
        <p><svg viewBox="0 0 20 20"><circle cx="8.500" cy="8.500" r="8" fill="#e9f4fa" stroke="#1f4a62" stroke-width="1.300"/><path d="m6 1 6 1 3 4-4 3-3-3-2-1zM1 7l4 2 1 5-3-1z" fill="#4a97bd"/><use href="#sw" x="7" y="6" width="14" height="14"/></svg>訂閱服務</p>
      </section>
    </div>
  </aside>
</div>

<footer class="status"><span class="edition">SOLIDWORKS Education Edition - 僅供教學使用</span><span class="editing">正在編輯： 零件</span><span class="units">MMGS</span><i class="ua"></i><svg class="tag" viewBox="0 0 18 16"><path d="m1 6 8-5 8 5-1 4-7 5-8-6z" fill="#eee" stroke="#333"/><circle cx="7" cy="6" r="2.500" fill="none" stroke="#333"/><path d="m9 9 6-3M10 12l6-4" stroke="#333"/></svg></footer>

<footer class="taskbar">
  <nav class="apps">
    <span><svg viewBox="0 0 24 24"><path d="m4 6 7-1v6.500H4zM12 4.800 20 4v7.500h-8zM4 12.500h7V19l-7-1zM12 12.500h8V20l-8-1z" fill="#fff"/></svg></span>
    <span><svg viewBox="0 0 24 24"><circle cx="14" cy="9.500" r="5" fill="none" stroke="#fff" stroke-width="1.400"/><path d="m10.500 13-6 6.500" stroke="#fff" stroke-width="1.400"/></svg></span>
    <span><svg viewBox="0 0 24 24"><path d="M1 3h8l2 2h12v17H1z" fill="#f5b82e"/><path d="M1 7h22v15H1z" fill="#fcd462"/><path d="M5 14h14v8h-4v-4H9v4H5z" fill="#3a96dd"/></svg></span>
    <span><svg viewBox="0 0 24 24"><circle cx="12" cy="12" r="11.500" fill="#1677c6"/><path d="M1 10C3-2 22-3 23.500 11c0 6-6 7-9 5 2-3 0-8-4-8-5 0-9 2-9.500 5z" fill="#39c6b4"/><path d="M12 .5c8 0 12 5.500 11.500 10.500-.5 6-6 7-9 5 2-2 1-7-2-8 4-1 3-6-.5-7.500z" fill="#4fd36b" opacity=".7"/><path d="M9 12c-2 7 5 11 12 8-7 7-20 2-19-7 1-4 5-5 8-4-1 .8-1 2-1 3z" fill="#1359a5"/><path d="M11 12c0-3 4-2 3.500 1-.5 2-1 3 .5 4 3 2 6 0 7-1-1 3-4 4-6 4-4-1-5-5-5-8z" fill="#213941"/></svg></span>
    <span><svg viewBox="0 0 24 24"><path d="M20.500 16c-4 9-17 6-16-4 1-10 17-11 16.500 1.500H9.500c0 5 6 5.500 7 2.500z" fill="#4cc2f1"/><path d="M9.500 10.500h6.500c0-4.500-6.500-4-6.500 0z" fill="#213941"/><path d="M3 22C-2 17 14-2 22 2c2 2 0 5-1 6 1-4-1-5-5-3C8 9 3 17 5 20c1 1 3 0 4-.5C7 21.500 5 23 3 22z" fill="#f4c430"/></svg></span>
    <span><svg viewBox="0 0 24 24"><circle cx="12" cy="12" r="11.500" fill="#fcc31e"/><path d="M12 12 2 6a11.500 11.500 0 0 0 9 17.500L16.500 15z" fill="#2da94f"/><path d="M2 6a11.500 11.500 0 0 1 20.500 1H12L6 14z" fill="#e33b2e"/><circle cx="12" cy="12" r="5.800" fill="#fff"/><circle cx="12" cy="12" r="4.600" fill="#3b7ded"/></svg></span>
    <span class="run"><svg viewBox="0 0 24 24"><path d="M3 5 5 8c2-1 3-2 4-2 2-4 4-5 6-6 0 3 5 5 6 9 5 8-1 15-9 15S0 18 1 12c0-3 1-5 2-7z" fill="#ff8a1f"/><path d="M15 0c0 3 5 5 6 9 2 5 0 9-4 12 1-6 0-12-6-16 1-3 3-4 4-5z" fill="#ffd23a"/><path d="M2 13c0 8 13 14 19 5-5 4-14 3-17-5z" fill="#f5326a"/><circle cx="11" cy="13" r="5" fill="#7a4be0"/><path d="M5 10c3-2 5 1 8 1-2 2-4 2-5 2z" fill="#ff8a1f"/></svg></span>
    <span class="run multi"><svg viewBox="0 0 24 24"><path d="M1 2h22v20H1z" fill="#0a0a0a" stroke="#aaa"/><path d="M1.500 2.500h21v3h-21z" fill="#ccc"/><path d="M6 8.500H4v3h2M8 9v.8M8 11v.8M10 8.500l1.500 3.500M13 12h5" stroke="#ddd" fill="none" stroke-width="1"/></svg></span>
    <span class="run multi"><svg viewBox="0 0 24 24"><ellipse cx="12" cy="12" rx="11" ry="11.500" fill="#4a4a4a"/><path d="M4 5c5 6 12 8 18 7M2 9c5 7 12 8 20 6.500M1.500 13c5 6 11 7 19 5.500M3 18c4 3 8 4 14 4M7 2c4 5 9 7 15 6.500M12 .5c3 3 5 4 8 4.500" fill="none" stroke="#aaa" stroke-width="1.100"/></svg></span>
    <span class="run active"><svg viewBox="0 0 24 24"><path d="m1 3 11-2.500L23 3v14l-10 5L1 17z" fill="#a31218"/><path d="m1 3 12 3 10-3L12 .500z" fill="#e3262c"/><path d="M10 8C7 5.500 3 8 6.500 10.500s1 5.500-3.500 3" fill="none" stroke="#fff" stroke-width="2.200"/><path d="m13 7 2 8 2-6 2 5 2-8" fill="none" stroke="#fff" stroke-width="1.800"/></svg><b>2022</b></span>
    <span class="run"><svg viewBox="0 0 24 24"><circle cx="12" cy="12" r="8" fill="none" stroke="#fff" stroke-width="4" stroke-dasharray="3.200 3.080"/><circle cx="12" cy="12" r="5.500" fill="none" stroke="#fff" stroke-width="2.500"/></svg></span>
  </nav>
  <div class="tray">
    <svg viewBox="0 0 20 20"><path d="m4 13 6-6 6 6" fill="none" stroke="#fff" stroke-width="1.400"/></svg>
    <svg viewBox="0 0 20 20"><path d="M2 7h2l4-4v13l-4-4H2z" fill="none" stroke="#fff" stroke-width="1.200"/><circle cx="13.500" cy="13.500" r="4.500" fill="#e0242a"/><path d="m11.500 11.500 4 4m0-4-4 4" stroke="#fff" stroke-width="1.300"/></svg>
    <svg viewBox="0 0 20 20"><circle cx="10" cy="10" r="8" fill="none" stroke="#fff" stroke-width="1.200"/><ellipse cx="10" cy="10" rx="4" ry="8" fill="none" stroke="#fff" stroke-width="1.200"/><path d="M3 6h14M2 10h16M3 14h14" stroke="#fff"/><circle cx="15" cy="15" r="4" fill="#1b2945" stroke="#fff" stroke-width="1.200"/><path d="m12.500 12.500 5 5" stroke="#fff"/></svg>
    <span class="ime">中</span>
    <span class="bopo">ㄅ</span>
    <div class="clock"><span>上午 11:27</span><span>2023/5/8</span></div>
    <svg class="note" viewBox="0 0 16 16"><path d="M0 0h16v12h-5l-3 4-2-4H0z" fill="#fff"/><path d="M3 3h10M3 6h10M3 9h7" stroke="#1b2945" stroke-width="1.200"/></svg>
    <i class="peek"></i>
  </div>
</footer>
</div>
</body>
</html>
```
FILE: styles.css
```css
* { box-sizing: border-box; }
body { margin: 0; background: #f7f7f7; font: 12px "Open Sans", "Noto Sans CJK TC", sans-serif; color: #111; overflow: hidden; }
svg { display: block; width: 20px; height: 20px; flex: none; }
.defs { position: absolute; width: 0; height: 0; }
.app { width: 1920px; height: 1080px; display: flex; flex-direction: column; }
i, b { font-style: normal; }

.dd { flex: none; width: 14px; height: 20px; display: flex; align-items: center; justify-content: center; }
.dd::before { content: ""; border: 2.500px solid transparent; border-top: 3px solid #333; border-bottom: 0; }
.dd.dim::before { border-top-color: #888; }

/* title bar */
.titlebar { height: 35px; flex: none; display: flex; align-items: stretch; border-bottom: 1px solid #c2c2c2; padding-top: 1px; background: linear-gradient(90deg, #c0c0c0 840px, #0078d7 840px 888px, #e4e4e4 888px 1081px, #c0c0c0 1081px) 0 0 / 100% 1px no-repeat #f7f7f7; }
.brand { width: 143px; border-right: 1px solid #bdbdbd; display: flex; align-items: center; padding-left: 5px; }
.ds { width: 21px; height: 22px; margin-top: -3px; }
.brand-name { width: 84px; margin-left: 4px; color: #da291c; font-size: 13.300px; letter-spacing: .1px; white-space: nowrap; margin-top: 1px; }
.brand-name b { font-weight: 800; font-style: italic; }
.brand-name i { font-style: italic; }
.brand-arrow { margin-left: 17px; border: 5px solid transparent; border-left: 5px solid #777; border-right: 0; }
.quick { display: flex; align-items: center; padding-left: 21px; width: 480px; }
.qi { width: 30px; display: flex; justify-content: center; flex: none; }
.qi svg { width: 19px; height: 19px; }
.pick { width: 31px; height: 30px; background: #b0b0b0; border: 1px solid #666; display: flex; align-items: center; justify-content: center; flex: none; }
.pick-dd { width: 13px; height: 30px; border: 1px solid #888; border-left: 0; display: flex; align-items: center; justify-content: center; flex: none; }
.doc-title { flex: 1; display: flex; align-items: center; padding-left: 406px; font-size: 11.200px; letter-spacing: -.1px; }
.search { width: 202px; height: 23px; margin: 5px 0 0; background: #fff; border: 1px solid #bcbcbc; display: flex; align-items: center; padding-left: 6px; color: #777; font-size: 13px; line-height: 18px; }
.prompt { width: 14px; height: 14px; }
.search span { margin: -2px 0 0 6px; flex: 1; }
.glass { width: 14px; height: 14px; margin-right: 3px; }
.wincontrols { display: flex; align-items: center; gap: 16px; padding: 0 11px 0 11px; color: #444; }
.wincontrols svg:nth-child(n+3) { width: 18px; height: 18px; margin: 0 1px; }

/* ribbon */
.ribbon { height: 82px; flex: none; display: flex; border-bottom: 1px solid #808080; padding: 1px 0 2px 6px; position: relative; font-size: 12.700px; line-height: 13.500px; }
.big { flex: none; display: flex; flex-direction: column; align-items: center; text-align: center; padding-top: 5px; position: relative; white-space: nowrap; }
.big svg { width: 20px; height: 20px; }
.big .dd { position: absolute; bottom: 0; left: calc(50% - 7px); }
.stack { flex: none; display: flex; flex-direction: column; white-space: nowrap; }
.stack div { height: 26px; display: flex; align-items: center; gap: 7px; padding-left: 2px; }
.sep { width: 1px; background: #bdbdbd; flex: none; }
.instant { width: 60px; background: #b1b1b1; border: 1px solid #707070; font-size: 11.500px; padding-top: 4px; margin-left: 1px; }
.collapse { position: absolute; right: 8px; bottom: 6px; width: 12px; height: 12px; color: #333; }
.w53 { width: 53px; } .w147 { width: 147px; } .w49 { width: 49px; } .w117 { width: 118px; } .w37 { width: 37px; } .w64 { width: 64.500px; } .w51 { width: 50px; } .w36 { width: 36px; }

/* workspace */
.workspace { flex: none; height: 905px; display: flex; }
.main { width: 1587px; flex: none; display: grid; grid-template: 22px 868px 15px / 243px 1fr; border-right: 1px solid #808080; }
.viewport { grid-area: 1 / 2 / 3 / 3; position: relative; border-bottom: 1px solid #808080;
  background:
    radial-gradient(ellipse 82% 56% at 0 0, #fff 54%, rgba(255,255,255,.62) 76%, rgba(255,255,255,0) 100%),
    radial-gradient(ellipse 24% 38% at 100% 0, rgba(244,244,246,.85), rgba(244,244,246,0)),
    radial-gradient(ellipse 20% 20% at 78% 44%, rgba(208,213,226,.5), rgba(208,213,226,0)),
    radial-gradient(ellipse 40% 22% at 100% 100%, rgba(238,240,246,.6), rgba(238,240,246,0)),
    linear-gradient(#e9ecf3 0, #e2e5ee 30%, #dfe3ed 48%, #dfe2ec 53%, #e8eaf2 57%, #f3f4f8 61%, #fbfbfd 65%, #fff 70%, #fff 84%, #f5f7f9 100%); }
.model { position: absolute; left: 417px; top: 473px; width: 560px; height: 416px; }
.triad { position: absolute; left: 6px; top: 797px; width: 60px; height: 56px; }
.axis { position: absolute; font: 9px "Liberation Sans", sans-serif; }
.ax-y { left: 38px; top: 788px; color: #1a8a1a; } .ax-z { left: 6px; top: 825px; color: #1414d0; font-weight: bold; } .ax-x { left: 54px; top: 829px; color: #e01010; }
.viewtools { position: absolute; left: 491px; top: 27px; display: flex; align-items: center; }
.viewtools .v { width: 20px; height: 20px; margin: 0 3px; opacity: .88; }
.viewtools .dd { margin: 0 0 0 -.5px; }
.docwin { position: absolute; right: 10px; top: 6px; display: flex; gap: 8px; color: #999; }
.docwin svg { width: 18px; height: 18px; }
.sidetabs { position: absolute; right: 0; top: 50px; width: 26px; border: 1px solid #808080; border-right: 0; }
.sidetabs span { display: flex; align-items: center; justify-content: center; height: 24px; background: #d2d2d2; border-bottom: 1px solid #808080; border-right: 1px solid #808080; }
.sidetabs span:last-child { border-bottom: 0; }
.sidetabs .on { background: #f7f7f7; border-right: 0; height: 23px; padding-right: 1px; }
.sidetabs svg { width: 19px; height: 19px; }

.cmdtabs { grid-area: 1 / 1 / 2 / 3; position: relative; display: flex; width: 901px; }
.cmdtabs span { flex: none; background: #d4d4d4; border-right: 1px solid #808080; border-bottom: 1px solid #808080; display: flex; align-items: center; justify-content: center; white-space: nowrap; font-size: 12.200px; letter-spacing: -.3px; color: #222; padding-right: 1px; }
.cmdtabs .on { background: #f7f7f7; border-bottom-color: #c8c8c8; color: #555; }
.w56 { width: 56px; } .w71 { width: 71px; } .w143 { width: 143px; } .w73 { width: 73px; } .w121 { width: 121px; } .w145 { width: 145px; } .w68 { width: 68px; }

/* feature tree */
.tree { grid-area: 2 / 1; background: #f7f7f7; border-right: 1px solid #808080; border-left: 1px solid #bbb; position: relative; display: flex; flex-direction: column; }
.grip { height: 16px; border-top: 1px solid #c4c4c4; margin: 4px 4px 0 0; border-bottom: 1px solid #c4c4c4; display: flex; align-items: center; justify-content: center; }
.grip i, .flyout i { width: 6px; height: 6px; border: 1px solid #888; border-radius: 50%; background: #ddd; }
.treetabs { margin-top: 4px; height: 26px; display: flex; border-top: 1px solid #808080; margin-right: 2px; }
.treetabs span { width: 40px; flex: none; background: #d4d4d4; border-right: 1px solid #808080; border-bottom: 1px solid #808080; display: flex; align-items: center; justify-content: center; padding-left: 2px; }
.treetabs .on { width: 41px; background: #f7f7f7; border-bottom: 0; padding-left: 3px; }
.treetabs svg { width: 19px; height: 19px; }
.pager { flex: 1; display: flex; background: #d4d4d4; padding-top: 5px; }
.pager b { flex: 1; border: 1px solid #aaa; border-bottom-color: #808080; background: #f2f2f2; display: flex; align-items: center; justify-content: center; font: 11px "DejaVu Sans", sans-serif; }
.filter { height: 26px; margin: 0 5px 0 4px; border: 1px solid #c2c2c2; display: flex; align-items: center; padding-left: 2px; }
.filter svg { width: 18px; height: 18px; }
.root { display: flex; height: 23px; align-items: center; padding-left: 3px; overflow: hidden; margin-right: 2px; white-space: nowrap; font-size: 12.200px; letter-spacing: .15px; padding-bottom: 2px; line-height: 18px; }
.root svg { width: 18px; height: 18px; }
.root svg + svg { width: 20px; margin-left: 5px; }
.root span { margin-left: 4px; }
.nodes { list-style: none; margin: 0; padding: 0; }
.nodes li { height: 21.980px; display: flex; align-items: center; white-space: nowrap; font-size: 12.100px; line-height: 18px; padding-bottom: 1px; }
.nodes li > i { width: 26px; padding-left: 9px; }
.nodes .tw::before { content: ""; display: block; width: 0; border: 4px solid transparent; border-left: 5px solid #666; border-right: 0; }
.nodes .open { padding-left: 7px; }
.nodes .open::before { border: 4px solid transparent; border-top: 5px solid #666; border-bottom: 0; }
.nodes svg { width: 18px; height: 18px; margin-right: 5px; }
.nodes .child { padding-left: 23px; }
.rollback { height: 3px; background: #338fc9; margin-right: 2px; }
.hscroll { margin-top: auto; height: 16px; display: flex; align-items: center; margin-right: 2px; background: #efefef; }
.hscroll svg { width: 10px; height: 10px; margin: 0 3px 0 4px; }
.track { flex: 1; height: 16px; } .track b { display: block; width: 173px; height: 16px; background: #cdcdcd; }
.split { margin: 2px 2px 3px 0; height: 2px; border-top: 1px solid #bbb; border-bottom: 1px solid #ddd; }
.flyout { position: absolute; left: 241px; top: 403px; width: 9px; height: 39px; background: #f7f7f7; border: 1px solid #808080; border-left: 0; display: flex; align-items: center; justify-content: center; z-index: 2; }

.modeltabs { grid-area: 3 / 1 / 4 / 3; display: flex; background: #f7f7f7; border-bottom: 1px solid #808080; margin-bottom: -1px; height: 16px; }
.modeltabs span { display: flex; align-items: center; justify-content: center; background: #d4d4d4; border-right: 1px solid #808080; font-size: 12.500px; white-space: nowrap; line-height: 12px; padding-bottom: 3px; }
.modeltabs .on { background: #f7f7f7; }
.vcr { width: 67px; display: flex; gap: 1px; background: #888; border-top: 1px solid #222; padding-left: 2px; }
.vcr svg { width: 15px; height: 14px; background: #a9aaae; }
.modeltabs .w47 { width: 48px; padding-left: 3px; } .w59 { width: 59px; } .modeltabs .w84 { width: 84px; padding-right: 8px; }

/* task pane */
.taskpane { flex: 1; display: flex; flex-direction: column; border-bottom: 1px solid #808080; margin-bottom: -1px; height: 905px; }
.tp-head { height: 22px; background: #abacb0; border-bottom: 1.500px solid #222; display: flex; align-items: center; padding: 0 4px 0 8px; color: #000; line-height: 16px; }
.tp-head span { flex: 1; text-align: center; padding: 0 1px 2px 0; font-size: 12px; }
.chev { width: 13px; height: 11px; } .tg { width: 18px; height: 18px; margin-right: 3px; } .pin { width: 14px; height: 14px; }
.tp-body { padding: 0 26px 0 14px; color: #505050; font-size: 11px; }
.welcome { display: flex; align-items: center; gap: 5px; height: 18px; margin-top: 28px; }
.welcome svg { width: 19px; height: 19px; margin-top: -2px; }
.grp { border-top: 1px solid #808080; }
.tools { margin-top: 27px; height: 215px; } .online { height: 103px; }
.grp h3 { margin: 0; height: 22px; padding: 0 7px 1px 3px; display: flex; align-items: center; justify-content: space-between; font-size: 11.500px; font-weight: 700; letter-spacing: -.15px; color: #444; }
.grp h3 svg { width: 12px; height: 12px; color: #777; }
.grp p { margin: 0; height: 28px; display: flex; align-items: center; gap: 4px; padding-left: 2px; white-space: nowrap; }
.grp p.lat { padding-top: 2px; }
.grp p.lat svg { margin-top: -4px; }
.grp p svg { width: 20px; height: 20px; margin-top: -2px; }

/* status + taskbar */
.status { height: 18px; flex: none; background: #f7f7f7; display: flex; align-items: center; padding: 1px 0 0 1px; font-size: 12px; white-space: nowrap; line-height: 16px; }
.edition { width: 1627px; letter-spacing: .18px; } .editing { width: 194px; } .units { width: 47px; }
.ua { border: 3px solid transparent; border-bottom: 4px solid #444; border-top: 0; }
.tag { margin-left: 26px; width: 16px; height: 15px; }
.taskbar { height: 40px; flex: none; display: flex; justify-content: space-between; background: linear-gradient(90deg, #213941, #20353f 50%, #1b2a44 80%, #1a2744); }
.apps { display: flex; margin-left: -1px; }
.apps span { width: 49px; height: 40px; display: flex; align-items: center; justify-content: center; position: relative; }
.apps svg { width: 24px; height: 24px; }
.run::after { content: ""; position: absolute; left: 5px; right: 4px; bottom: 0; height: 2px; background: #76b9ed; }
.multi::after { background: linear-gradient(90deg, #76b9ed 32px, #4f83b0 32px); }
.active { background: #4d6067; }
.active::after { left: 0; right: 0; }
.active b { position: absolute; left: 18px; top: 23px; font: bold 8.500px/10px "Liberation Sans", sans-serif; color: #fff; text-shadow: 0 0 2px #000, 0 0 1px #000; }
.tray { display: flex; align-items: center; color: #fff; gap: 4px; }
.tray svg { width: 20px; height: 20px; }
.ime { width: 20px; text-align: center; font-size: 13px; }
.bopo { width: 14px; height: 14px; background: #fff; color: #111; font-size: 11px; line-height: 14px; text-align: center; margin: 0 8px 0 7px; }
.clock { display: flex; flex-direction: column; align-items: center; line-height: 18px; width: 70px; font-size: 12px; letter-spacing: -.2px; }
.tray .note { width: 16px; height: 16px; margin: 0 15px 0 10px; }
.peek { width: 5px; height: 40px; border-left: 1px solid #6b7588; }
```
